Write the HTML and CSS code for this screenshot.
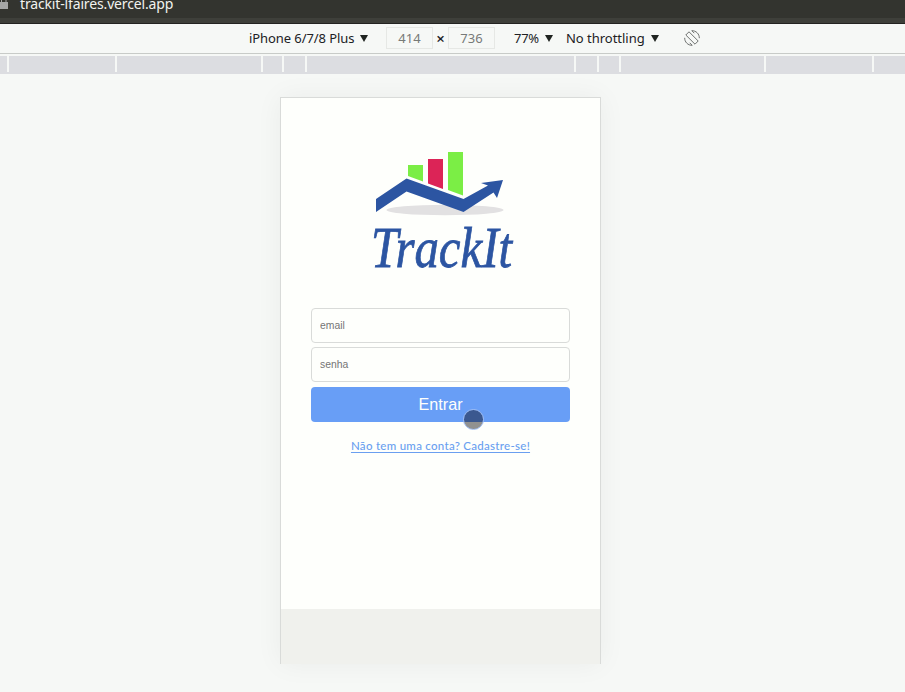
FILE: index.html
```html
<!DOCTYPE html>
<html lang="pt-BR">
<head>
<meta charset="utf-8">
<title>TrackIt</title>
<link rel="stylesheet" href="styles.css">
</head>
<body>
<header class="address">
  <svg class="lock" width="8" height="9" viewBox="0 0 8 9"><path d="M1.500 3V0M6 3V0" stroke="#a5a6a5" fill="none"/><path d="M0 2h8v7H0z" fill="#a5a6a5"/></svg>
  <span class="url">trackit-lfaires.vercel.app</span>
</header>
<div class="toolbar">
  <span class="device">iPhone 6/7/8 Plus</span><i class="caret"></i>
  <span class="size first">414</span><span class="times">×</span><span class="size">736</span>
  <span class="zoom">77%</span><i class="caret"></i>
  <span class="throttle">No throttling</span><i class="caret"></i>
  <svg class="rotate" width="16" height="16" viewBox="0 0 16 16" fill="none" stroke="#6e716f"><path d="M5 1.800L14.200 11L11 14.200L1.800 5z"/><path d="M7.800 .7C12 .5 15.500 4 15.300 8.200M.7 7.800C.5 12 4 15.500 8.200 15.300M7.800 .7l2.500 2.500M8.200 15.300l-2.500-2.500"/></svg>
</div>
<div class="ruler"><i></i><i></i><i></i><i></i><i></i><i></i><i></i><i></i><i></i><i></i><i></i></div>
<main class="stage">
  <section class="phone">
    <div class="screen">
      <svg class="logo" width="150" height="134" viewBox="366 146 150 134" role="img" aria-label="TrackIt">
        <ellipse cx="445" cy="210" rx="58.500" ry="5.200" fill="#e2e1e2"/>
        <path d="M408 165h15v16.500l-15-5.500z" fill="#7bee45"/>
        <path d="M428 159h15v30l-15-5.500z" fill="#dc2457"/>
        <path d="M448 152h15v43.500l-15-5.500z" fill="#7bee45"/>
        <path d="M376 199l30.500-20.500L463.500 199l24.500-13.500-7-2.500 22-3-6 18-3.500-5.500L463.500 212 406.500 191.500 376 212z" fill="#2c55a2"/>
        <text class="wordmark" x="371" y="267" textLength="141" lengthAdjust="spacingAndGlyphs">TrackIt</text>
      </svg>
      <form class="login">
        <input type="email" placeholder="email">
        <input type="password" placeholder="senha">
        <button type="button">Entrar<i class="pointer"></i></button>
      </form>
      <a class="signup" href="#">Não tem uma conta? Cadastre-se!</a>
    </div>
  </section>
</main>
</body>
</html>
```
FILE: styles.css
```css
* { box-sizing: border-box; }
body { margin: 0; height: 692px; overflow: hidden; background: #f6f8f6; font-family: "Noto Sans", sans-serif; }
.address { height: 24px; display: flex; align-items: flex-start; background: linear-gradient(#33342f 18px, #3e3f3a 18px); border-bottom: 1px solid #232321; color: #f1f2ee; }
.lock { flex: none; }
.url { margin-left: 12px; margin-top: -6px; font-size: 14px; line-height: 20px; letter-spacing: -.15px; white-space: nowrap; }
.toolbar { height: 30px; display: flex; align-items: center; padding: 0 0 2px 249px; border-bottom: 1px solid #c8cbc8; color: #202124; font-size: 13px; white-space: nowrap; }
.caret { width: 8px; height: 7px; margin-top: 2px; background: #202421; clip-path: polygon(0 0, 100% 0, 50% 100%); }
.device { width: 111px; letter-spacing: -.08px; }
.size { width: 47px; height: 22px; border: 1px solid #e6e8e5; text-align: center; line-height: 20px; color: #777a78; }
.first { margin-left: 18px; }
.times { width: 15px; text-align: center; font-size: 15px; font-weight: 600; }
.zoom { width: 31px; margin-left: 19px; letter-spacing: -.3px; }
.throttle { width: 85px; margin-left: 13px; letter-spacing: -.02px; }
.rotate { margin-left: 25px; }
.ruler { height: 18px; margin-top: 2px; display: grid; grid-template-columns: 7px 106px 144px 19px 21px 267px 21px 20px 143px 106px 31px; column-gap: 2px; background: linear-gradient(#f6f8f6 16px, #dcdde1 16px); }
.ruler i { background: #dcdde1; }
.stage { display: flex; padding: 23px 0 0 280px; }
.phone { width: 321px; height: 567px; border: 1px solid #d9dbd9; border-bottom: 0; background: #f0f1ed; box-shadow: 0 0 26px rgba(0, 0, 0, .05); }
.screen { height: 511px; background: #fefffc; display: flex; flex-direction: column; align-items: center; padding-top: 48px; }
.logo { flex: none; overflow: visible; }
.wordmark { font: italic 400 58px "Liberation Serif", serif; fill: #2c55a2; stroke: #2c55a2; stroke-width: .8px; }
.login { margin-top: 28px; width: 259px; display: flex; flex-direction: column; gap: 4px; }
.login input { width: 100%; height: 35px; border: 1px solid #d9dbd9; border-radius: 4px; background: #fefffc; padding: 0 8px; font: 10.400px "Liberation Sans", sans-serif; }
.login input::placeholder { color: #757575; }
.login button { position: relative; height: 35px; margin-top: 1px; border: 0; border-radius: 4px; background: #689ef6; color: #fefffc; font: 16.200px "Liberation Sans", sans-serif; }
.pointer { position: absolute; left: 152px; top: 22px; width: 21px; height: 21px; border: 1px solid #9fbdf3; border-radius: 50%; background: linear-gradient(#3b588f 12px, #919190 12px); }
.signup { margin-top: 15px; font: 500 11.500px/17px Lato, sans-serif; letter-spacing: .28px; color: #6a9ff0; text-underline-offset: 2px; white-space: nowrap; }
```
